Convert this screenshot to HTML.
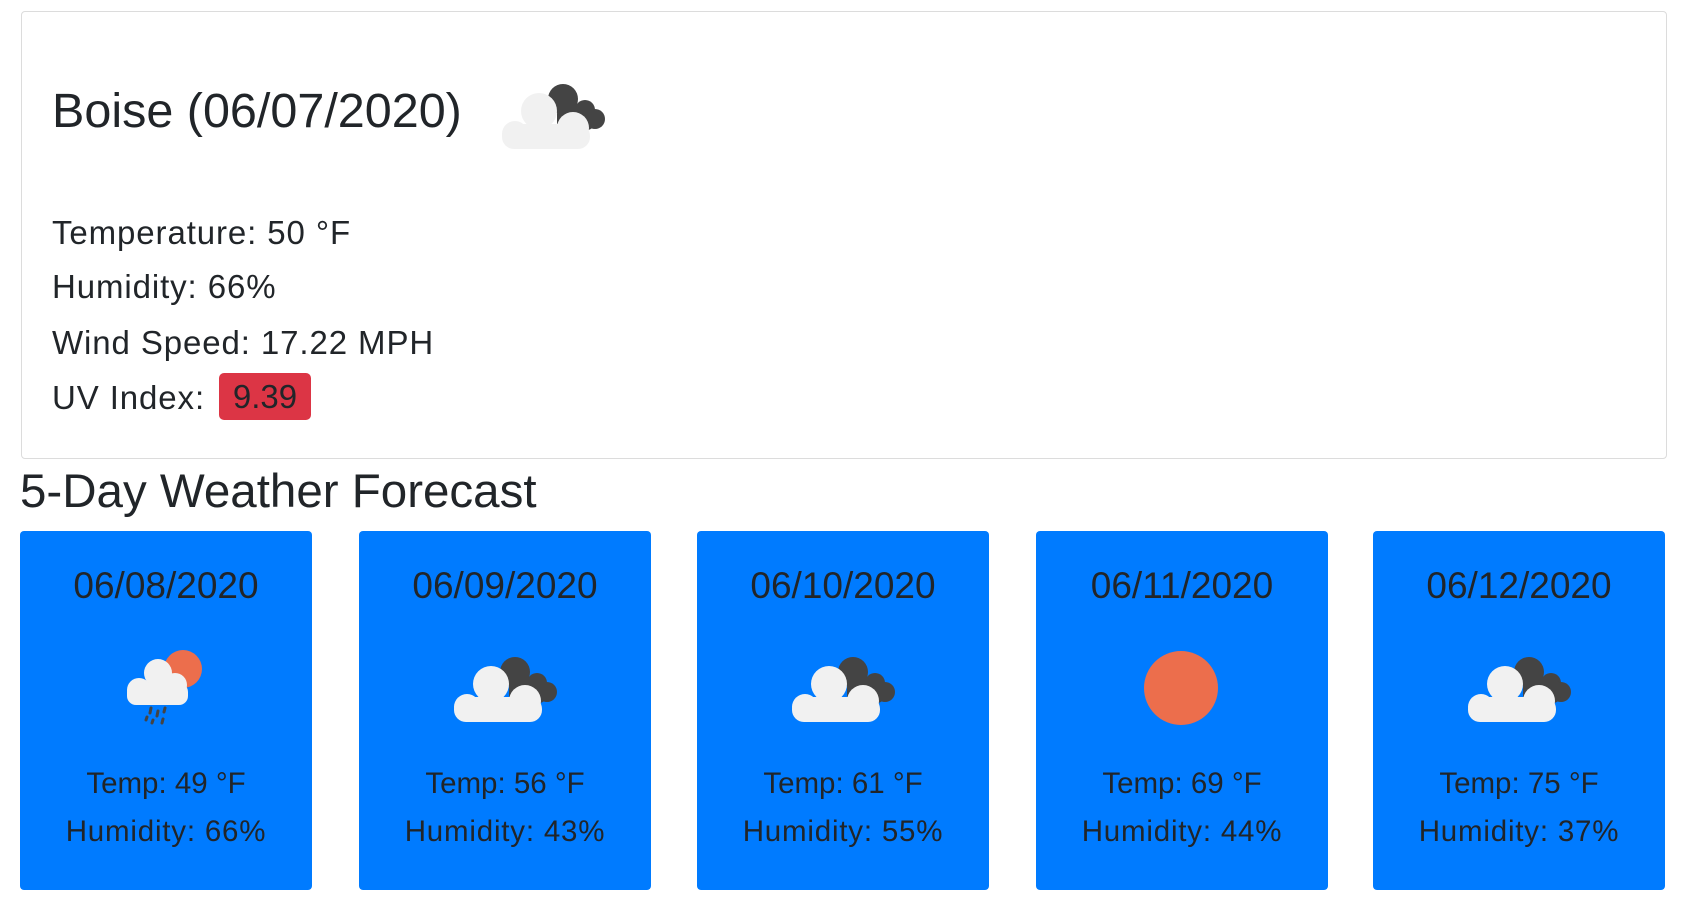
<!DOCTYPE html>
<html><head><meta charset="utf-8"><style>
*{margin:0;padding:0;box-sizing:border-box}
body{width:1681px;height:906px;background:#fff;font-family:"Liberation Sans",sans-serif;color:#212529;position:relative;overflow:hidden}
.main{position:absolute;left:21px;top:11px;width:1646px;height:448px;border:1px solid #dcdcdc;border-radius:4px}
.abs{position:absolute;white-space:nowrap}
.title{left:52px;top:83px;font-size:48.5px;line-height:56px}
.line{left:52px;font-size:33px;line-height:40px;letter-spacing:0.9px}
.uv{position:absolute;left:219px;top:373px;width:92px;height:47px;background:#dc3545;border-radius:5px;font-size:33px;line-height:47px;text-align:center}
.h2{left:20px;top:465px;font-size:47.5px;line-height:54px}
.card{position:absolute;top:531px;width:292px;height:359px;background:#007bff;border-radius:4px;text-align:center}
.card .d{position:absolute;left:0;right:0;top:33px;font-size:37px;line-height:44px}
.card svg{position:absolute;left:90px;top:120px}
.card .p1{position:absolute;left:0;right:0;top:236px;font-size:29.5px;line-height:34px}
.card .p2{position:absolute;left:0;right:0;top:284px;font-size:29.5px;line-height:34px;letter-spacing:0.8px}
</style></head><body>
<svg width="0" height="0" style="position:absolute"><defs>
<g id="cl">
<g fill="#444"><circle cx="66" cy="21" r="15"/><circle cx="88" cy="32" r="10"/><circle cx="98" cy="41" r="10"/><rect x="60" y="28" width="38" height="24" rx="8"/></g>
<g fill="#f1f1f1"><circle cx="42" cy="33" r="18"/><circle cx="18" cy="56" r="13"/><circle cx="76" cy="50" r="16"/><rect x="5" y="46" width="88" height="25" rx="12"/></g>
</g></defs></svg>
<div class="main"></div>
<div class="abs title">Boise (06/07/2020)</div>
<svg class="abs" style="left:497px;top:78px" width="115" height="80" viewBox="0 0 115 80"><use href="#cl"/></svg>
<div class="abs line" style="top:213px">Temperature: 50 °F</div>
<div class="abs line" style="top:267px">Humidity: 66%</div>
<div class="abs line" style="top:323px">Wind Speed: 17.22 MPH</div>
<div class="abs line" style="top:378px">UV Index:</div>
<div class="uv">9.39</div>
<div class="abs h2">5-Day Weather Forecast</div>

<div class="card" style="left:20px"><div class="d">06/08/2020</div>
<svg style="left:100px;top:114px" width="90" height="90" viewBox="0 0 90 90"><circle cx="63" cy="24" r="19" fill="#ec6e4c"/>
<g fill="#f1f1f1"><circle cx="38" cy="28" r="14"/><circle cx="19" cy="45" r="12"/><circle cx="55" cy="40" r="12"/><rect x="7" y="38" width="61" height="22" rx="9"/></g>
<g stroke="#444" stroke-width="3" stroke-linecap="round"><line x1="31" y1="63" x2="30" y2="68"/><line x1="38" y1="66" x2="37" y2="71"/><line x1="45" y1="63" x2="44" y2="67"/><line x1="27" y1="72" x2="26" y2="75"/><line x1="33" y1="75" x2="32" y2="78"/><line x1="43" y1="74" x2="42" y2="78"/></g></svg>
<div class="p1">Temp: 49 °F</div><div class="p2">Humidity: 66%</div></div>

<div class="card" style="left:359px"><div class="d">06/09/2020</div>
<svg width="115" height="80" viewBox="0 0 115 80"><use href="#cl"/></svg>
<div class="p1">Temp: 56 °F</div><div class="p2">Humidity: 43%</div></div>

<div class="card" style="left:697px"><div class="d">06/10/2020</div>
<svg width="115" height="80" viewBox="0 0 115 80"><use href="#cl"/></svg>
<div class="p1">Temp: 61 °F</div><div class="p2">Humidity: 55%</div></div>

<div class="card" style="left:1036px"><div class="d">06/11/2020</div>
<svg style="left:96px;top:110px" width="100" height="100" viewBox="0 0 100 100"><circle cx="49" cy="47" r="37" fill="#ec6e4c"/></svg>
<div class="p1">Temp: 69 °F</div><div class="p2">Humidity: 44%</div></div>

<div class="card" style="left:1373px"><div class="d">06/12/2020</div>
<svg width="115" height="80" viewBox="0 0 115 80"><use href="#cl"/></svg>
<div class="p1">Temp: 75 °F</div><div class="p2">Humidity: 37%</div></div>
</body></html>
